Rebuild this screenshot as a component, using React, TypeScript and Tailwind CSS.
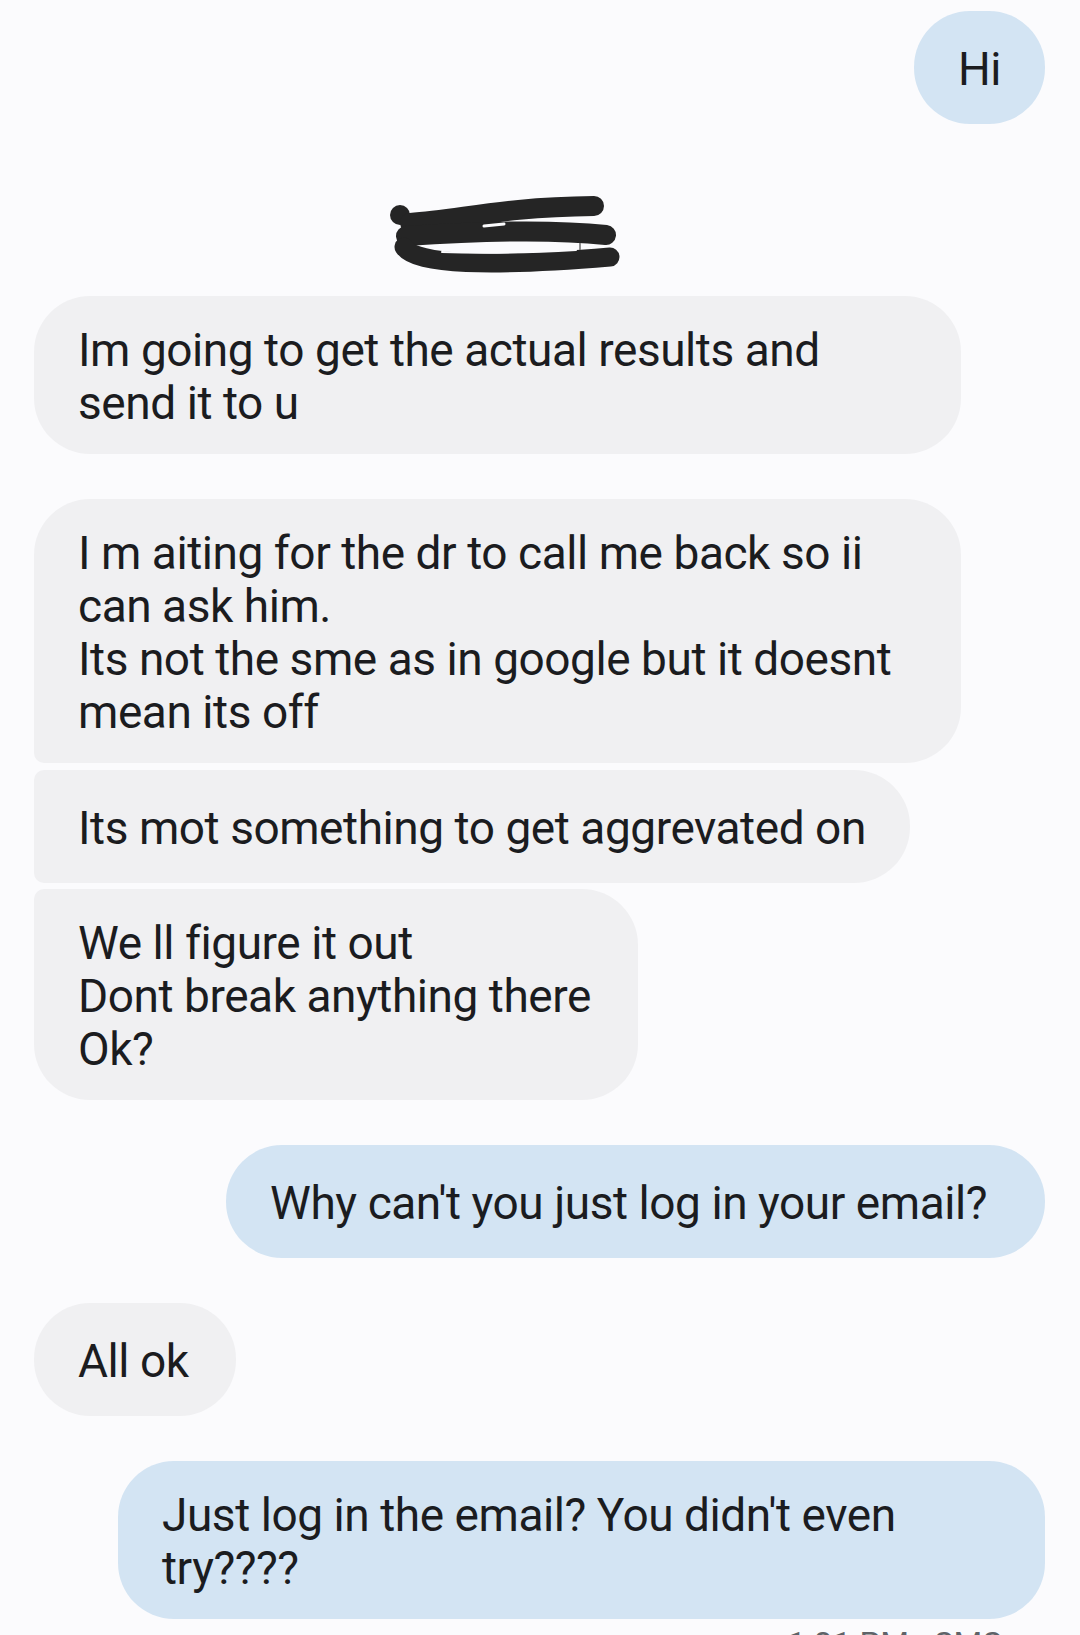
import React from "react";

type BubbleProps = {
  text: string;
  sent?: boolean;
  wide?: boolean;
  corners?: string;
  className?: string;
};

function Bubble({ text, sent, wide, corners, className }: BubbleProps) {
  return (
    <div
      className={[
        "flex min-h-[113px] max-w-[927px] items-center pl-[44px] pt-[28px] pb-[24px] text-[46px] leading-[53px] tracking-[-0.45px] text-[#1b1c1f] whitespace-pre-line",
        sent ? "self-end bg-[#d3e4f3]" : "self-start bg-[#f0f0f2]",
        wide ? "w-[927px]" : "",
        corners ?? "rounded-[56px]",
        className ?? "pr-[44px]",
      ].join(" ")}
    >
      <span>{text}</span>
    </div>
  );
}

function Scribble() {
  return (
    <svg width="240" height="90" viewBox="0 0 240 90" fill="none">
      <circle cx="20" cy="25" r="10" fill="#252525" />
      <path
        d="M30 33 C 80 30, 120 17, 214 16"
        stroke="#252525"
        strokeWidth="20"
        strokeLinecap="round"
      />
      <path
        d="M26 46 C 100 41, 170 39, 226 45"
        stroke="#252525"
        strokeWidth="20"
        strokeLinecap="round"
      />
      <path
        d="M24 57 C 36 75, 110 77, 230 67"
        stroke="#252525"
        strokeWidth="19"
        strokeLinecap="round"
      />
      <path d="M104 36 L 124 34" stroke="#fbfbfd" strokeWidth="3" strokeLinecap="round" />
      <path d="M62 62 C 110 64, 160 62, 196 60" stroke="#fbfbfd" strokeWidth="2" strokeLinecap="round" />
      <path d="M200 53 L 200 60" stroke="#6b6b6b" strokeWidth="1.5" />
    </svg>
  );
}

export default function App() {
  return (
    <div
      className="h-[1635px] w-[1080px] overflow-hidden bg-[#fbfbfd]"
      style={{ fontFamily: "Roboto, 'Noto Sans', sans-serif" }}
    >
      <div className="flex flex-col pl-[34px] pr-[35px] pt-[11px]">
        <Bubble text="Hi" sent />
        <div className="h-[172px] pl-[346px] pt-[66px]">
          <Scribble />
        </div>
        <Bubble wide text={"Im going to get the actual results and\nsend it to u"} />
        <Bubble
          className="mt-[45px] pr-[44px]"
          corners="rounded-[56px] rounded-bl-[10px]"
          text={
            "I m aiting for the dr to call me back so ii can ask him.\nIts not the sme as in google but it doesnt mean its off"
          }
        />
        <Bubble
          className="mt-[7px] pr-[44px]"
          corners="rounded-[56px] rounded-tl-[10px] rounded-bl-[10px]"
          text="Its mot something to get aggrevated on"
        />
        <Bubble
          className="mt-[6px] pr-[47px]"
          corners="rounded-[56px] rounded-tl-[10px]"
          text={"We ll figure it out\nDont break anything there\nOk?"}
        />
        <Bubble className="mt-[45px] pr-[58px]" sent text="Why can't you just log in your email?" />
        <Bubble className="mt-[45px] pr-[47px]" text="All ok" />
        <Bubble
          className="mt-[45px] pr-[44px]"
          sent
          text="Just log in the email? You didn't even try????"
        />
        <div className="mt-[9px] self-end pr-[43px] text-[33px] leading-[33px] text-[#5f6368]">
          1:31 PM · SMS
        </div>
      </div>
    </div>
  );
}
